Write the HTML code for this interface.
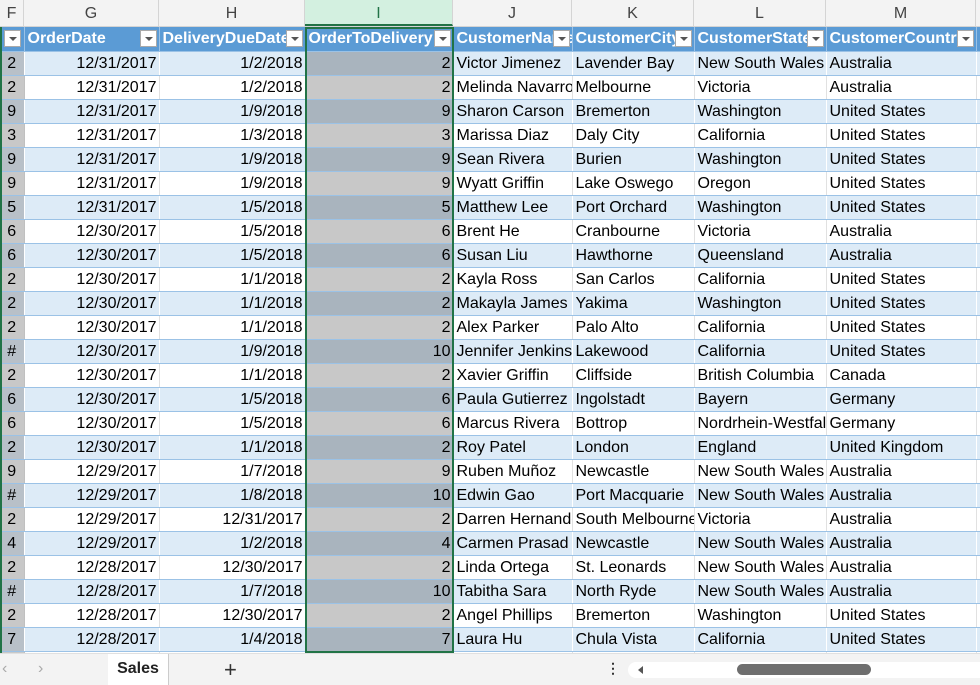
<!DOCTYPE html>
<html><head><meta charset="utf-8"><style>
body{margin:0;width:980px;height:684px;overflow:hidden;background:#fff;font-family:"Liberation Sans",sans-serif;font-size:16px;position:relative}
.colh{position:absolute;top:0;left:0;height:27px;width:980px;background:#f3f3f3;border-bottom:1px solid #d4d4d4;box-sizing:border-box}
.colh div{position:absolute;top:0;height:26px;line-height:28px;text-align:center;color:#444;font-size:16px;border-right:1px solid #d4d4d4;box-sizing:border-box}
table{position:absolute;top:27px;left:0;width:986px;border-collapse:collapse;table-layout:fixed}
td{height:24px;padding:0 2px 0 3px;white-space:nowrap;overflow:hidden;border-bottom:1px solid #9bc2e6;border-right:1px solid #e1e1e1;box-sizing:border-box;color:#000;line-height:23px}
tr.b td{background:#ddebf7;border-right-color:#fff}
td.f{background:#c8c8c8;text-align:center;padding:0;border-right:1px solid #c0c0c0}
tr.b td.f{background:#b8c0c8}
td.i{background:#c8c8c8;text-align:right}
tr.b td.i{background:#a9b4be}
td.r{text-align:right}
tr.h td{background:#5b9bd5;color:#fff;font-weight:bold;font-size:16px;border-bottom:1px solid #9bc2e6;border-right:1px solid #9bc2e6;position:relative;padding-right:20px}
.dd{position:absolute;right:2px;top:3px;width:17px;height:17px;background:#fff;border:1px solid #aaa;box-sizing:border-box}
.dd:after{content:"";position:absolute;left:4px;top:6px;border-left:4px solid transparent;border-right:4px solid transparent;border-top:4px solid #555}
.sel{position:absolute;left:305px;top:27px;width:149px;height:626px;border:2px solid #217346;box-sizing:border-box;pointer-events:none}
.tabs{position:absolute;top:653px;left:0;width:980px;height:31px;background:#f3f3f3;border-top:1px solid #e0e0e0}
</style></head><body>
<div class="colh">
<div style="left:0;width:24px">F</div><div style="left:24px;width:135px">G</div><div style="left:159px;width:146px">H</div><div style="left:305px;width:148px;background:#d3f0e0;border-bottom:2px solid #217346;color:#217346">I</div><div style="left:453px;width:119px">J</div><div style="left:572px;width:122px">K</div><div style="left:694px;width:132px">L</div><div style="left:826px;width:150px">M</div>
</div>
<div style="position:absolute;left:0;top:27px;width:2px;height:626px;background:#217346;z-index:2"></div>
<table>
<colgroup><col style="width:24px"><col style="width:135px"><col style="width:146px"><col style="width:148px"><col style="width:119px"><col style="width:122px"><col style="width:132px"><col style="width:150px"><col style="width:10px"></colgroup>
<tr class="h"><td style="background:#5b9bd5;padding:0"><span class="dd" style="right:3px"></span></td><td>OrderDate<span class="dd"></span></td><td>DeliveryDueDate<span class="dd"></span></td><td>OrderToDelivery<span class="dd"></span></td><td>CustomerName<span class="dd"></span></td><td>CustomerCity<span class="dd"></span></td><td>CustomerState<span class="dd"></span></td><td>CustomerCountry<span class="dd"></span></td><td style="padding:0"></td></tr>
<tr class="b"><td class="f">2</td><td class="r">12/31/2017</td><td class="r">1/2/2018</td><td class="i">2</td><td>Victor Jimenez</td><td>Lavender Bay</td><td>New South Wales</td><td>Australia</td><td></td></tr>
<tr><td class="f">2</td><td class="r">12/31/2017</td><td class="r">1/2/2018</td><td class="i">2</td><td>Melinda Navarro</td><td>Melbourne</td><td>Victoria</td><td>Australia</td><td></td></tr>
<tr class="b"><td class="f">9</td><td class="r">12/31/2017</td><td class="r">1/9/2018</td><td class="i">9</td><td>Sharon Carson</td><td>Bremerton</td><td>Washington</td><td>United States</td><td></td></tr>
<tr><td class="f">3</td><td class="r">12/31/2017</td><td class="r">1/3/2018</td><td class="i">3</td><td>Marissa Diaz</td><td>Daly City</td><td>California</td><td>United States</td><td></td></tr>
<tr class="b"><td class="f">9</td><td class="r">12/31/2017</td><td class="r">1/9/2018</td><td class="i">9</td><td>Sean Rivera</td><td>Burien</td><td>Washington</td><td>United States</td><td></td></tr>
<tr><td class="f">9</td><td class="r">12/31/2017</td><td class="r">1/9/2018</td><td class="i">9</td><td>Wyatt Griffin</td><td>Lake Oswego</td><td>Oregon</td><td>United States</td><td></td></tr>
<tr class="b"><td class="f">5</td><td class="r">12/31/2017</td><td class="r">1/5/2018</td><td class="i">5</td><td>Matthew Lee</td><td>Port Orchard</td><td>Washington</td><td>United States</td><td></td></tr>
<tr><td class="f">6</td><td class="r">12/30/2017</td><td class="r">1/5/2018</td><td class="i">6</td><td>Brent He</td><td>Cranbourne</td><td>Victoria</td><td>Australia</td><td></td></tr>
<tr class="b"><td class="f">6</td><td class="r">12/30/2017</td><td class="r">1/5/2018</td><td class="i">6</td><td>Susan Liu</td><td>Hawthorne</td><td>Queensland</td><td>Australia</td><td></td></tr>
<tr><td class="f">2</td><td class="r">12/30/2017</td><td class="r">1/1/2018</td><td class="i">2</td><td>Kayla Ross</td><td>San Carlos</td><td>California</td><td>United States</td><td></td></tr>
<tr class="b"><td class="f">2</td><td class="r">12/30/2017</td><td class="r">1/1/2018</td><td class="i">2</td><td>Makayla James</td><td>Yakima</td><td>Washington</td><td>United States</td><td></td></tr>
<tr><td class="f">2</td><td class="r">12/30/2017</td><td class="r">1/1/2018</td><td class="i">2</td><td>Alex Parker</td><td>Palo Alto</td><td>California</td><td>United States</td><td></td></tr>
<tr class="b"><td class="f">#</td><td class="r">12/30/2017</td><td class="r">1/9/2018</td><td class="i">10</td><td>Jennifer Jenkins</td><td>Lakewood</td><td>California</td><td>United States</td><td></td></tr>
<tr><td class="f">2</td><td class="r">12/30/2017</td><td class="r">1/1/2018</td><td class="i">2</td><td>Xavier Griffin</td><td>Cliffside</td><td>British Columbia</td><td>Canada</td><td></td></tr>
<tr class="b"><td class="f">6</td><td class="r">12/30/2017</td><td class="r">1/5/2018</td><td class="i">6</td><td>Paula Gutierrez</td><td>Ingolstadt</td><td>Bayern</td><td>Germany</td><td></td></tr>
<tr><td class="f">6</td><td class="r">12/30/2017</td><td class="r">1/5/2018</td><td class="i">6</td><td>Marcus Rivera</td><td>Bottrop</td><td>Nordrhein-Westfalen</td><td>Germany</td><td></td></tr>
<tr class="b"><td class="f">2</td><td class="r">12/30/2017</td><td class="r">1/1/2018</td><td class="i">2</td><td>Roy Patel</td><td>London</td><td>England</td><td>United Kingdom</td><td></td></tr>
<tr><td class="f">9</td><td class="r">12/29/2017</td><td class="r">1/7/2018</td><td class="i">9</td><td>Ruben Muñoz</td><td>Newcastle</td><td>New South Wales</td><td>Australia</td><td></td></tr>
<tr class="b"><td class="f">#</td><td class="r">12/29/2017</td><td class="r">1/8/2018</td><td class="i">10</td><td>Edwin Gao</td><td>Port Macquarie</td><td>New South Wales</td><td>Australia</td><td></td></tr>
<tr><td class="f">2</td><td class="r">12/29/2017</td><td class="r">12/31/2017</td><td class="i">2</td><td>Darren Hernandez</td><td>South Melbourne</td><td>Victoria</td><td>Australia</td><td></td></tr>
<tr class="b"><td class="f">4</td><td class="r">12/29/2017</td><td class="r">1/2/2018</td><td class="i">4</td><td>Carmen Prasad</td><td>Newcastle</td><td>New South Wales</td><td>Australia</td><td></td></tr>
<tr><td class="f">2</td><td class="r">12/28/2017</td><td class="r">12/30/2017</td><td class="i">2</td><td>Linda Ortega</td><td>St. Leonards</td><td>New South Wales</td><td>Australia</td><td></td></tr>
<tr class="b"><td class="f">#</td><td class="r">12/28/2017</td><td class="r">1/7/2018</td><td class="i">10</td><td>Tabitha Sara</td><td>North Ryde</td><td>New South Wales</td><td>Australia</td><td></td></tr>
<tr><td class="f">2</td><td class="r">12/28/2017</td><td class="r">12/30/2017</td><td class="i">2</td><td>Angel Phillips</td><td>Bremerton</td><td>Washington</td><td>United States</td><td></td></tr>
<tr class="b"><td class="f">7</td><td class="r">12/28/2017</td><td class="r">1/4/2018</td><td class="i">7</td><td>Laura Hu</td><td>Chula Vista</td><td>California</td><td>United States</td><td></td></tr>
<tr><td class="f"></td><td></td><td></td><td class="i"></td><td></td><td></td><td></td><td></td><td></td></tr>
</table>
<div class="sel"></div>
<div class="tabs">
<div style="position:absolute;left:2px;top:6px;color:#aaa;font-size:16px">&#x2039;</div>
<div style="position:absolute;left:38px;top:6px;color:#aaa;font-size:16px">&#x203A;</div>
<div style="position:absolute;left:108px;top:0;width:60px;height:31px;background:#fff;border-right:1px solid #ccc;text-align:center;line-height:30px;font-weight:bold;color:#222;font-size:16px">Sales</div>
<div style="position:absolute;left:224px;top:3px;font-size:22px;color:#333">+</div>
<div style="position:absolute;left:606px;top:6px;font-size:14px;color:#333;font-weight:bold">&#8942;</div>
<div style="position:absolute;left:628px;top:8px;width:352px;height:16px;background:#fff;border-radius:8px 0 0 8px"></div>
<div style="position:absolute;left:638px;top:12px;border-top:4px solid transparent;border-bottom:4px solid transparent;border-right:5px solid #555"></div>
<div style="position:absolute;left:737px;top:10px;width:134px;height:11px;background:#6e6e6e;border-radius:6px"></div>
</div>
</body></html>
